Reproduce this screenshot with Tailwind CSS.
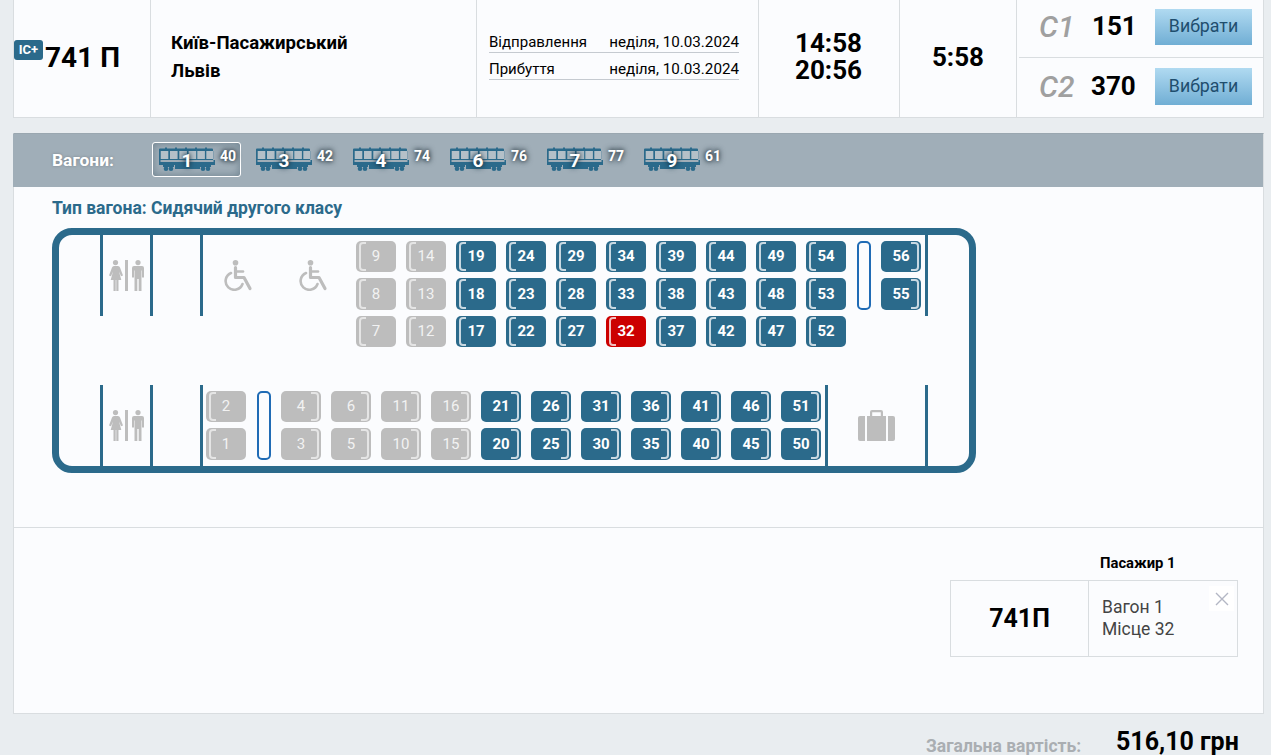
<!DOCTYPE html>
<html lang="uk">
<head>
    <meta charset="UTF-8">
    <meta name="viewport" content="width=device-width, initial-scale=1.0">
    <title>Вибір місця</title>
    <script src="https://cdn.jsdelivr.net/npm/@tailwindcss/browser@4"></script>
</head>
<body class="bg-[#e9edf0] font-[Roboto,sans-serif] h-[755px] overflow-hidden text-black">

    <!-- Рядок поїзда -->
    <div class="ml-[13px] w-[1251px] h-[118px] flex bg-[#fbfcfe] border-x border-b border-[#d9dde0]">
        <div class="w-[137px] border-r border-[#d9dde0] flex items-center relative">
            <span class="absolute left-0 top-[40px] w-[29px] h-[20px] bg-[#2b6a8b] rounded-[3px] text-white text-[13px] font-bold flex items-center justify-center">IC+</span>
            <span class="ml-[31px] text-[28px] font-bold leading-none mt-[-2px]">741 П</span>
        </div>
        <div class="w-[326px] border-r border-[#d9dde0] pl-[20px] pt-[29px] text-[18.600px] font-bold leading-[28px]">
            <div>Київ-Пасажирський</div>
            <div>Львів</div>
        </div>
        <div class="w-[282px] border-r border-[#d9dde0] pl-[12px] pt-[32px] text-[15px]">
            <div class="w-[250px] h-[21px] flex justify-between items-center border-b border-[#c5cad0]"><span>Відправлення</span><span class="text-[15.200px]">неділя, 10.03.2024</span></div>
            <div class="w-[250px] h-[27px] pt-[6px] flex justify-between items-center border-b border-[#c5cad0]"><span>Прибуття</span><span class="text-[15.200px]">неділя, 10.03.2024</span></div>
        </div>
        <div class="w-[141px] border-r border-[#d9dde0] flex flex-col items-center justify-center text-[26px] font-bold leading-[27px] pb-[3px] pr-px">
            <div>14:58</div>
            <div>20:56</div>
        </div>
        <div class="w-[117px] border-r border-[#d9dde0] flex items-center justify-center text-[26px] font-bold pb-[2px]">5:58</div>
        <div class="flex-1 flex flex-col">
            <div class="h-[58px] ml-[2px] border-b border-[#d9dde0] flex items-center pb-[4px]">
                <span class="ml-[20px] w-[53px] text-[30px] font-medium italic text-[#a0a0a0] mt-[-1px]">C1</span>
                <span class="w-[63px] text-[26px] font-bold">151</span>
                <button class="w-[97px] h-[36px] bg-linear-to-b from-[#b0daf1] to-[#70aed4] text-[#1f4e6e] text-[17.800px]">Вибрати</button>
            </div>
            <div class="flex-1 ml-[2px] flex items-center pb-[2px]">
                <span class="ml-[20px] w-[52px] text-[30px] font-medium italic text-[#a0a0a0] mt-[-1px]">C2</span>
                <span class="w-[64px] text-[26px] font-bold">370</span>
                <button class="w-[97px] h-[37px] bg-linear-to-b from-[#b0daf1] to-[#70aed4] text-[#1f4e6e] text-[17.800px]">Вибрати</button>
            </div>
        </div>
    </div>

    <!-- Панель вагонів -->
    <div class="ml-[13px] mt-[15px] w-[1251px] h-[581px] bg-[#fbfcfe] border border-[#d9dde0] border-t-[#9aa7b0]">
        <div class="h-[53px] bg-[#a0aeb8] -ml-px pl-[39px] flex items-center gap-[38px] text-white">
            <span class="text-[17.400px] font-bold [text-shadow:0_0_3px_rgba(0,0,0,.25)] w-[62px] whitespace-nowrap">Вагони:</span>
            <div class="flex gap-[8px] mt-[-3px]">
                <div class="relative w-[89px] h-[35px] border border-white rounded-[3px] shadow-[inset_0_0_8px_rgba(70,95,110,.6)]">
                    <svg class="absolute left-[6px] top-[4px]" width="56" height="25" viewBox="0 0 56 25"><use href="#wagon"/></svg>
                    <b class="absolute left-[6px] w-[56px] top-[5px] text-center text-[19px] leading-[25px] [text-shadow:0_0_4px_#1c3a4a,0_0_6px_#1c3a4a]">1</b>
                    <b class="absolute left-[67px] top-[5px] text-[14px] leading-[16px] [text-shadow:0_0_4px_#2a3a44,0_0_6px_#2a3a44]">40</b>
                </div>
                <div class="relative w-[89px] h-[35px]">
                    <svg class="absolute left-[7px] top-[5px]" width="56" height="25" viewBox="0 0 56 25"><use href="#wagon"/></svg>
                    <b class="absolute left-[7px] w-[56px] top-[6px] text-center text-[19px] leading-[25px] [text-shadow:0_0_4px_#1c3a4a,0_0_6px_#1c3a4a]">3</b>
                    <b class="absolute left-[68px] top-[6px] text-[14px] leading-[16px] [text-shadow:0_0_4px_#2a3a44,0_0_6px_#2a3a44]">42</b>
                </div>
                <div class="relative w-[89px] h-[35px]">
                    <svg class="absolute left-[7px] top-[5px]" width="56" height="25" viewBox="0 0 56 25"><use href="#wagon"/></svg>
                    <b class="absolute left-[7px] w-[56px] top-[6px] text-center text-[19px] leading-[25px] [text-shadow:0_0_4px_#1c3a4a,0_0_6px_#1c3a4a]">4</b>
                    <b class="absolute left-[68px] top-[6px] text-[14px] leading-[16px] [text-shadow:0_0_4px_#2a3a44,0_0_6px_#2a3a44]">74</b>
                </div>
                <div class="relative w-[89px] h-[35px]">
                    <svg class="absolute left-[7px] top-[5px]" width="56" height="25" viewBox="0 0 56 25"><use href="#wagon"/></svg>
                    <b class="absolute left-[7px] w-[56px] top-[6px] text-center text-[19px] leading-[25px] [text-shadow:0_0_4px_#1c3a4a,0_0_6px_#1c3a4a]">6</b>
                    <b class="absolute left-[68px] top-[6px] text-[14px] leading-[16px] [text-shadow:0_0_4px_#2a3a44,0_0_6px_#2a3a44]">76</b>
                </div>
                <div class="relative w-[89px] h-[35px]">
                    <svg class="absolute left-[7px] top-[5px]" width="56" height="25" viewBox="0 0 56 25"><use href="#wagon"/></svg>
                    <b class="absolute left-[7px] w-[56px] top-[6px] text-center text-[19px] leading-[25px] [text-shadow:0_0_4px_#1c3a4a,0_0_6px_#1c3a4a]">7</b>
                    <b class="absolute left-[68px] top-[6px] text-[14px] leading-[16px] [text-shadow:0_0_4px_#2a3a44,0_0_6px_#2a3a44]">77</b>
                </div>
                <div class="relative w-[89px] h-[35px]">
                    <svg class="absolute left-[7px] top-[5px]" width="56" height="25" viewBox="0 0 56 25"><use href="#wagon"/></svg>
                    <b class="absolute left-[7px] w-[56px] top-[6px] text-center text-[19px] leading-[25px] [text-shadow:0_0_4px_#1c3a4a,0_0_6px_#1c3a4a]">9</b>
                    <b class="absolute left-[68px] top-[6px] text-[14px] leading-[16px] [text-shadow:0_0_4px_#2a3a44,0_0_6px_#2a3a44]">61</b>
                </div>
            </div>
        </div>

        <div class="pl-[38px] h-[41px] pt-[11px] text-[17.500px] leading-[20px] font-bold text-[#2b6a8b]">Тип вагона: Сидячий другого класу</div>

        <!-- Схема вагона -->
        <div class="ml-[38px] w-[924px] h-[245px] border-[7px] border-[#2b6a8b] rounded-[20px] flex flex-col justify-between">
            <!-- верхній ряд -->
            <div class="h-[81px] pl-[41px] flex">
                <div class="w-[50px] border-l-[3px] border-[#2b6a8b] pt-[25px] pl-[5px]"><svg width="36" height="31" viewBox="0 0 36 31"><use href="#wc"/></svg></div>
                <div class="w-[50px] border-l-[3px] border-[#2b6a8b]"></div>
                <div class="w-[728px] border-x-[3px] border-[#2b6a8b] flex">
                    <div class="w-[153px] shrink-0 pl-[20px] pt-[25px] flex gap-[45px] items-start">
                        <svg width="30" height="31" viewBox="0 0 30 31"><use href="#wheelchair"/></svg>
                        <svg width="30" height="31" viewBox="0 0 30 31"><use href="#wheelchair"/></svg>
                    </div>
                    <div class="flex items-start pt-[6px] gap-[10px]">
                        <div class="flex flex-col gap-[6px] text-[15px] text-[#f2f2f2]">
                            <div class="relative w-10 h-[31px] rounded-[5px] bg-[#bdbdbd] flex items-center justify-center"><i class="absolute left-[3px] top-px bottom-px w-[7px] border-2 border-r-0 rounded-l-[4px] border-white/60"></i>9</div>
                            <div class="relative w-10 h-[32px] rounded-[5px] bg-[#bdbdbd] flex items-center justify-center"><i class="absolute left-[3px] top-px bottom-px w-[7px] border-2 border-r-0 rounded-l-[4px] border-white/60"></i>8</div>
                            <div class="relative w-10 h-[31px] rounded-[5px] bg-[#bdbdbd] flex items-center justify-center"><i class="absolute left-[3px] top-px bottom-px w-[7px] border-2 border-r-0 rounded-l-[4px] border-white/60"></i>7</div>
                        </div>
                        <div class="flex flex-col gap-[6px] text-[15px] text-[#f2f2f2]">
                            <div class="relative w-10 h-[31px] rounded-[5px] bg-[#bdbdbd] flex items-center justify-center"><i class="absolute left-[3px] top-px bottom-px w-[7px] border-2 border-r-0 rounded-l-[4px] border-white/60"></i>14</div>
                            <div class="relative w-10 h-[32px] rounded-[5px] bg-[#bdbdbd] flex items-center justify-center"><i class="absolute left-[3px] top-px bottom-px w-[7px] border-2 border-r-0 rounded-l-[4px] border-white/60"></i>13</div>
                            <div class="relative w-10 h-[31px] rounded-[5px] bg-[#bdbdbd] flex items-center justify-center"><i class="absolute left-[3px] top-px bottom-px w-[7px] border-2 border-r-0 rounded-l-[4px] border-white/60"></i>12</div>
                        </div>
                        <div class="flex flex-col gap-[6px] text-[15px] font-bold text-white">
                            <div class="relative w-10 h-[31px] rounded-[5px] bg-[#2b6a8b] flex items-center justify-center"><i class="absolute left-[3px] top-px bottom-px w-[7px] border-2 border-r-0 rounded-l-[4px] border-white/75"></i>19</div>
                            <div class="relative w-10 h-[32px] rounded-[5px] bg-[#2b6a8b] flex items-center justify-center"><i class="absolute left-[3px] top-px bottom-px w-[7px] border-2 border-r-0 rounded-l-[4px] border-white/75"></i>18</div>
                            <div class="relative w-10 h-[31px] rounded-[5px] bg-[#2b6a8b] flex items-center justify-center"><i class="absolute left-[3px] top-px bottom-px w-[7px] border-2 border-r-0 rounded-l-[4px] border-white/75"></i>17</div>
                        </div>
                        <div class="flex flex-col gap-[6px] text-[15px] font-bold text-white">
                            <div class="relative w-10 h-[31px] rounded-[5px] bg-[#2b6a8b] flex items-center justify-center"><i class="absolute left-[3px] top-px bottom-px w-[7px] border-2 border-r-0 rounded-l-[4px] border-white/75"></i>24</div>
                            <div class="relative w-10 h-[32px] rounded-[5px] bg-[#2b6a8b] flex items-center justify-center"><i class="absolute left-[3px] top-px bottom-px w-[7px] border-2 border-r-0 rounded-l-[4px] border-white/75"></i>23</div>
                            <div class="relative w-10 h-[31px] rounded-[5px] bg-[#2b6a8b] flex items-center justify-center"><i class="absolute left-[3px] top-px bottom-px w-[7px] border-2 border-r-0 rounded-l-[4px] border-white/75"></i>22</div>
                        </div>
                        <div class="flex flex-col gap-[6px] text-[15px] font-bold text-white">
                            <div class="relative w-10 h-[31px] rounded-[5px] bg-[#2b6a8b] flex items-center justify-center"><i class="absolute left-[3px] top-px bottom-px w-[7px] border-2 border-r-0 rounded-l-[4px] border-white/75"></i>29</div>
                            <div class="relative w-10 h-[32px] rounded-[5px] bg-[#2b6a8b] flex items-center justify-center"><i class="absolute left-[3px] top-px bottom-px w-[7px] border-2 border-r-0 rounded-l-[4px] border-white/75"></i>28</div>
                            <div class="relative w-10 h-[31px] rounded-[5px] bg-[#2b6a8b] flex items-center justify-center"><i class="absolute left-[3px] top-px bottom-px w-[7px] border-2 border-r-0 rounded-l-[4px] border-white/75"></i>27</div>
                        </div>
                        <div class="flex flex-col gap-[6px] text-[15px] font-bold text-white">
                            <div class="relative w-10 h-[31px] rounded-[5px] bg-[#2b6a8b] flex items-center justify-center"><i class="absolute left-[3px] top-px bottom-px w-[7px] border-2 border-r-0 rounded-l-[4px] border-white/75"></i>34</div>
                            <div class="relative w-10 h-[32px] rounded-[5px] bg-[#2b6a8b] flex items-center justify-center"><i class="absolute left-[3px] top-px bottom-px w-[7px] border-2 border-r-0 rounded-l-[4px] border-white/75"></i>33</div>
                            <div class="relative w-10 h-[31px] rounded-[5px] bg-[#cc0000] flex items-center justify-center"><i class="absolute left-[3px] top-px bottom-px w-[7px] border-2 border-r-0 rounded-l-[4px] border-white/75"></i>32</div>
                        </div>
                        <div class="flex flex-col gap-[6px] text-[15px] font-bold text-white">
                            <div class="relative w-10 h-[31px] rounded-[5px] bg-[#2b6a8b] flex items-center justify-center"><i class="absolute left-[3px] top-px bottom-px w-[7px] border-2 border-r-0 rounded-l-[4px] border-white/75"></i>39</div>
                            <div class="relative w-10 h-[32px] rounded-[5px] bg-[#2b6a8b] flex items-center justify-center"><i class="absolute left-[3px] top-px bottom-px w-[7px] border-2 border-r-0 rounded-l-[4px] border-white/75"></i>38</div>
                            <div class="relative w-10 h-[31px] rounded-[5px] bg-[#2b6a8b] flex items-center justify-center"><i class="absolute left-[3px] top-px bottom-px w-[7px] border-2 border-r-0 rounded-l-[4px] border-white/75"></i>37</div>
                        </div>
                        <div class="flex flex-col gap-[6px] text-[15px] font-bold text-white">
                            <div class="relative w-10 h-[31px] rounded-[5px] bg-[#2b6a8b] flex items-center justify-center"><i class="absolute left-[3px] top-px bottom-px w-[7px] border-2 border-r-0 rounded-l-[4px] border-white/75"></i>44</div>
                            <div class="relative w-10 h-[32px] rounded-[5px] bg-[#2b6a8b] flex items-center justify-center"><i class="absolute left-[3px] top-px bottom-px w-[7px] border-2 border-r-0 rounded-l-[4px] border-white/75"></i>43</div>
                            <div class="relative w-10 h-[31px] rounded-[5px] bg-[#2b6a8b] flex items-center justify-center"><i class="absolute left-[3px] top-px bottom-px w-[7px] border-2 border-r-0 rounded-l-[4px] border-white/75"></i>42</div>
                        </div>
                        <div class="flex flex-col gap-[6px] text-[15px] font-bold text-white">
                            <div class="relative w-10 h-[31px] rounded-[5px] bg-[#2b6a8b] flex items-center justify-center"><i class="absolute left-[3px] top-px bottom-px w-[7px] border-2 border-r-0 rounded-l-[4px] border-white/75"></i>49</div>
                            <div class="relative w-10 h-[32px] rounded-[5px] bg-[#2b6a8b] flex items-center justify-center"><i class="absolute left-[3px] top-px bottom-px w-[7px] border-2 border-r-0 rounded-l-[4px] border-white/75"></i>48</div>
                            <div class="relative w-10 h-[31px] rounded-[5px] bg-[#2b6a8b] flex items-center justify-center"><i class="absolute left-[3px] top-px bottom-px w-[7px] border-2 border-r-0 rounded-l-[4px] border-white/75"></i>47</div>
                        </div>
                        <div class="flex flex-col gap-[6px] text-[15px] font-bold text-white">
                            <div class="relative w-10 h-[31px] rounded-[5px] bg-[#2b6a8b] flex items-center justify-center"><i class="absolute left-[3px] top-px bottom-px w-[7px] border-2 border-r-0 rounded-l-[4px] border-white/75"></i>54</div>
                            <div class="relative w-10 h-[32px] rounded-[5px] bg-[#2b6a8b] flex items-center justify-center"><i class="absolute left-[3px] top-px bottom-px w-[7px] border-2 border-r-0 rounded-l-[4px] border-white/75"></i>53</div>
                            <div class="relative w-10 h-[31px] rounded-[5px] bg-[#2b6a8b] flex items-center justify-center"><i class="absolute left-[3px] top-px bottom-px w-[7px] border-2 border-r-0 rounded-l-[4px] border-white/75"></i>52</div>
                        </div>
                        <div class="w-[14px] h-[69px] ml-px border-2 border-[#1f6bb5] rounded-[5px]"></div>
                        <div class="flex flex-col gap-[6px] text-[15px] font-bold text-white">
                            <div class="relative w-10 h-[31px] rounded-[5px] bg-[#2b6a8b] flex items-center justify-center"><i class="absolute right-[2px] top-px bottom-px w-[8px] border-2 border-l-0 rounded-r-[4px] border-white/75"></i>56</div>
                            <div class="relative w-10 h-[32px] rounded-[5px] bg-[#2b6a8b] flex items-center justify-center"><i class="absolute right-[2px] top-px bottom-px w-[8px] border-2 border-l-0 rounded-r-[4px] border-white/75"></i>55</div>
                        </div>
                    </div>
                </div>
            </div>
            <!-- нижній ряд -->
            <div class="h-[81px] pl-[41px] flex">
                <div class="w-[50px] border-l-[3px] border-[#2b6a8b] pt-[25px] pl-[5px]"><svg width="36" height="31" viewBox="0 0 36 31"><use href="#wc"/></svg></div>
                <div class="w-[50px] border-l-[3px] border-[#2b6a8b]"></div>
                <div class="w-[625px] border-l-[3px] border-[#2b6a8b] pl-[3px] pt-[6px] flex items-start gap-[10px]">
                    <div class="flex flex-col gap-[6px] text-[15px] text-[#f2f2f2]">
                        <div class="relative w-10 h-[31px] rounded-[5px] bg-[#bdbdbd] flex items-center justify-center"><i class="absolute left-[3px] top-px bottom-px w-[7px] border-2 border-r-0 rounded-l-[4px] border-white/60"></i>2</div>
                        <div class="relative w-10 h-[32px] rounded-[5px] bg-[#bdbdbd] flex items-center justify-center"><i class="absolute left-[3px] top-px bottom-px w-[7px] border-2 border-r-0 rounded-l-[4px] border-white/60"></i>1</div>
                    </div>
                    <div class="w-[14px] h-[69px] ml-px border-2 border-[#1f6bb5] rounded-[5px]"></div>
                    <div class="flex flex-col gap-[6px] text-[15px] text-[#f2f2f2]">
                        <div class="relative w-10 h-[31px] rounded-[5px] bg-[#bdbdbd] flex items-center justify-center"><i class="absolute right-[2px] top-px bottom-px w-[8px] border-2 border-l-0 rounded-r-[4px] border-white/60"></i>4</div>
                        <div class="relative w-10 h-[32px] rounded-[5px] bg-[#bdbdbd] flex items-center justify-center"><i class="absolute right-[2px] top-px bottom-px w-[8px] border-2 border-l-0 rounded-r-[4px] border-white/60"></i>3</div>
                    </div>
                    <div class="flex flex-col gap-[6px] text-[15px] text-[#f2f2f2]">
                        <div class="relative w-10 h-[31px] rounded-[5px] bg-[#bdbdbd] flex items-center justify-center"><i class="absolute right-[2px] top-px bottom-px w-[8px] border-2 border-l-0 rounded-r-[4px] border-white/60"></i>6</div>
                        <div class="relative w-10 h-[32px] rounded-[5px] bg-[#bdbdbd] flex items-center justify-center"><i class="absolute right-[2px] top-px bottom-px w-[8px] border-2 border-l-0 rounded-r-[4px] border-white/60"></i>5</div>
                    </div>
                    <div class="flex flex-col gap-[6px] text-[15px] text-[#f2f2f2]">
                        <div class="relative w-10 h-[31px] rounded-[5px] bg-[#bdbdbd] flex items-center justify-center"><i class="absolute right-[2px] top-px bottom-px w-[8px] border-2 border-l-0 rounded-r-[4px] border-white/60"></i>11</div>
                        <div class="relative w-10 h-[32px] rounded-[5px] bg-[#bdbdbd] flex items-center justify-center"><i class="absolute right-[2px] top-px bottom-px w-[8px] border-2 border-l-0 rounded-r-[4px] border-white/60"></i>10</div>
                    </div>
                    <div class="flex flex-col gap-[6px] text-[15px] text-[#f2f2f2]">
                        <div class="relative w-10 h-[31px] rounded-[5px] bg-[#bdbdbd] flex items-center justify-center"><i class="absolute right-[2px] top-px bottom-px w-[8px] border-2 border-l-0 rounded-r-[4px] border-white/60"></i>16</div>
                        <div class="relative w-10 h-[32px] rounded-[5px] bg-[#bdbdbd] flex items-center justify-center"><i class="absolute right-[2px] top-px bottom-px w-[8px] border-2 border-l-0 rounded-r-[4px] border-white/60"></i>15</div>
                    </div>
                    <div class="flex flex-col gap-[6px] text-[15px] font-bold text-white">
                        <div class="relative w-10 h-[31px] rounded-[5px] bg-[#2b6a8b] flex items-center justify-center"><i class="absolute right-[2px] top-px bottom-px w-[8px] border-2 border-l-0 rounded-r-[4px] border-white/75"></i>21</div>
                        <div class="relative w-10 h-[32px] rounded-[5px] bg-[#2b6a8b] flex items-center justify-center"><i class="absolute right-[2px] top-px bottom-px w-[8px] border-2 border-l-0 rounded-r-[4px] border-white/75"></i>20</div>
                    </div>
                    <div class="flex flex-col gap-[6px] text-[15px] font-bold text-white">
                        <div class="relative w-10 h-[31px] rounded-[5px] bg-[#2b6a8b] flex items-center justify-center"><i class="absolute right-[2px] top-px bottom-px w-[8px] border-2 border-l-0 rounded-r-[4px] border-white/75"></i>26</div>
                        <div class="relative w-10 h-[32px] rounded-[5px] bg-[#2b6a8b] flex items-center justify-center"><i class="absolute right-[2px] top-px bottom-px w-[8px] border-2 border-l-0 rounded-r-[4px] border-white/75"></i>25</div>
                    </div>
                    <div class="flex flex-col gap-[6px] text-[15px] font-bold text-white">
                        <div class="relative w-10 h-[31px] rounded-[5px] bg-[#2b6a8b] flex items-center justify-center"><i class="absolute right-[2px] top-px bottom-px w-[8px] border-2 border-l-0 rounded-r-[4px] border-white/75"></i>31</div>
                        <div class="relative w-10 h-[32px] rounded-[5px] bg-[#2b6a8b] flex items-center justify-center"><i class="absolute right-[2px] top-px bottom-px w-[8px] border-2 border-l-0 rounded-r-[4px] border-white/75"></i>30</div>
                    </div>
                    <div class="flex flex-col gap-[6px] text-[15px] font-bold text-white">
                        <div class="relative w-10 h-[31px] rounded-[5px] bg-[#2b6a8b] flex items-center justify-center"><i class="absolute right-[2px] top-px bottom-px w-[8px] border-2 border-l-0 rounded-r-[4px] border-white/75"></i>36</div>
                        <div class="relative w-10 h-[32px] rounded-[5px] bg-[#2b6a8b] flex items-center justify-center"><i class="absolute right-[2px] top-px bottom-px w-[8px] border-2 border-l-0 rounded-r-[4px] border-white/75"></i>35</div>
                    </div>
                    <div class="flex flex-col gap-[6px] text-[15px] font-bold text-white">
                        <div class="relative w-10 h-[31px] rounded-[5px] bg-[#2b6a8b] flex items-center justify-center"><i class="absolute right-[2px] top-px bottom-px w-[8px] border-2 border-l-0 rounded-r-[4px] border-white/75"></i>41</div>
                        <div class="relative w-10 h-[32px] rounded-[5px] bg-[#2b6a8b] flex items-center justify-center"><i class="absolute right-[2px] top-px bottom-px w-[8px] border-2 border-l-0 rounded-r-[4px] border-white/75"></i>40</div>
                    </div>
                    <div class="flex flex-col gap-[6px] text-[15px] font-bold text-white">
                        <div class="relative w-10 h-[31px] rounded-[5px] bg-[#2b6a8b] flex items-center justify-center"><i class="absolute right-[2px] top-px bottom-px w-[8px] border-2 border-l-0 rounded-r-[4px] border-white/75"></i>46</div>
                        <div class="relative w-10 h-[32px] rounded-[5px] bg-[#2b6a8b] flex items-center justify-center"><i class="absolute right-[2px] top-px bottom-px w-[8px] border-2 border-l-0 rounded-r-[4px] border-white/75"></i>45</div>
                    </div>
                    <div class="flex flex-col gap-[6px] text-[15px] font-bold text-white">
                        <div class="relative w-10 h-[31px] rounded-[5px] bg-[#2b6a8b] flex items-center justify-center"><i class="absolute right-[2px] top-px bottom-px w-[8px] border-2 border-l-0 rounded-r-[4px] border-white/75"></i>51</div>
                        <div class="relative w-10 h-[32px] rounded-[5px] bg-[#2b6a8b] flex items-center justify-center"><i class="absolute right-[2px] top-px bottom-px w-[8px] border-2 border-l-0 rounded-r-[4px] border-white/75"></i>50</div>
                    </div>
                </div>
                <div class="w-[103px] border-x-[3px] border-[#2b6a8b] pl-[30px] pt-[25px]">
                    <svg width="37" height="31" viewBox="0 0 37 31"><use href="#suitcase"/></svg>
                </div>
            </div>
        </div>

        <!-- Вибрані місця -->
        <div class="mt-[54px] h-[187px] border-t border-[#d9dde0] pt-[27px] pl-[936px]">
            <div class="pl-[150px] h-[25px] text-[14.800px] font-bold leading-[16px] whitespace-nowrap">Пасажир 1</div>
            <div class="w-[288px] h-[77px] flex border border-[#d9dde0]">
                <div class="w-[138px] border-r border-[#d9dde0] flex items-center justify-center text-[25px] font-bold">741П</div>
                <div class="relative flex-1 pl-[13px] pt-[15px] text-[17.500px] leading-[22px] text-[#444]">
                    <div>Вагон 1</div>
                    <div>Місце 32</div>
                    <div class="absolute right-[3px] top-[5px] w-[25px] h-[25px] bg-white flex items-center justify-center">
                        <svg width="14" height="14" viewBox="0 0 14 14"><path d="M1 1l12 12M13 1L1 13" stroke="#b3b6c4" stroke-width="1.4" fill="none"/></svg>
                    </div>
                </div>
            </div>
        </div>
    </div>

    <!-- Разом -->
    <div class="ml-[926px] mt-[11px] flex items-start">
        <span class="w-[190px] mt-[11px] text-[17.500px] leading-[20px] font-bold text-[#aaaeb2] whitespace-nowrap">Загальна вартість:</span>
        <span class="mt-[2px] text-[25px] font-bold leading-[30px]">516,10 грн</span>
    </div>

    <!-- Іконки -->
    <svg width="0" height="0" class="absolute">
        <defs>
            <g id="wagon" fill="#2b6a8b">
                <path d="M1.500 4h53v8h-53z" fill="#b4c0c8"/>
                <path fill-rule="evenodd" d="M0 2.500q0-1 1-1h5v-1h2v1h8v-1h2v1h8v-1h2v1h8v-1h2v1h8v-1h2v1h5q1 0 1 1v10.500h-56zM1.700 4v8h7.600v-8zM11 4v8h7.600v-8zM20.300 4v8h7.600v-8zM29.600 4v8h7.600v-8zM38.300 4v8h7.600v-8zM47.300 4v8h7v-8z"/>
                <path d="M0 13h1.500v2h53v-2h1.500v5h-15v4h-25v-4h-16z"/>
                <path d="M4 18h11v2h-11zM41 18h11v2h-11z"/>
                <circle cx="7" cy="21.700" r="2.300"/><circle cx="12" cy="21.700" r="2.300"/>
                <circle cx="44" cy="21.700" r="2.300"/><circle cx="49" cy="21.700" r="2.300"/>
            </g>
            <g id="wc" fill="#bdbdbd">
                <circle cx="7.500" cy="2.600" r="2.600"/>
                <path d="M5 6h5q1.500 0 2 1.500l3 8-2 .8-2-4.800 2.300 8.500h-2.800v11h-2.200v-11h-.600v11h-2.200v-11h-2.800l2.300-8.500-2 4.800-2-.8 3-8q.5-1.500 2-1.500z"/>
                <rect x="17" y="0" width="3" height="31"/>
                <circle cx="30" cy="2.600" r="2.600"/>
                <path d="M26 6h8q2 0 2 2v9.500h-2v-7h-.500v20.500h-2.800v-12h-1.400v12h-2.800v-20.500h-.500v7h-2v-9.500q0-2 2-2z"/>
            </g>
            <g id="wheelchair">
                <circle cx="12.500" cy="2.800" r="2.800" fill="#bdbdbd"/>
                <path d="M12.500 7.500v10h8.500l6 11" stroke="#bdbdbd" stroke-width="3.200" fill="none" stroke-linejoin="round" stroke-linecap="round"/>
                <path d="M12.500 11.500h7.500" stroke="#bdbdbd" stroke-width="2.600" fill="none" stroke-linecap="round"/>
                <path d="M8 13a8.700 8.700 0 1 0 11.500 11" stroke="#bdbdbd" stroke-width="2.600" fill="none" stroke-linecap="round"/>
            </g>
            <g id="suitcase" fill="#bdbdbd">
                <path d="M12 6v-4a2 2 0 0 1 2-2h9a2 2 0 0 1 2 2v4h-2.200v-3.800h-8.600v3.800z"/>
                <path d="M2 6h5v25h-5a2 2 0 0 1-2-2v-21a2 2 0 0 1 2-2zM9 6h19v25h-19zM30 6h5a2 2 0 0 1 2 2v21a2 2 0 0 1-2 2h-5z"/>
            </g>
        </defs>
    </svg>
</body>
</html>
